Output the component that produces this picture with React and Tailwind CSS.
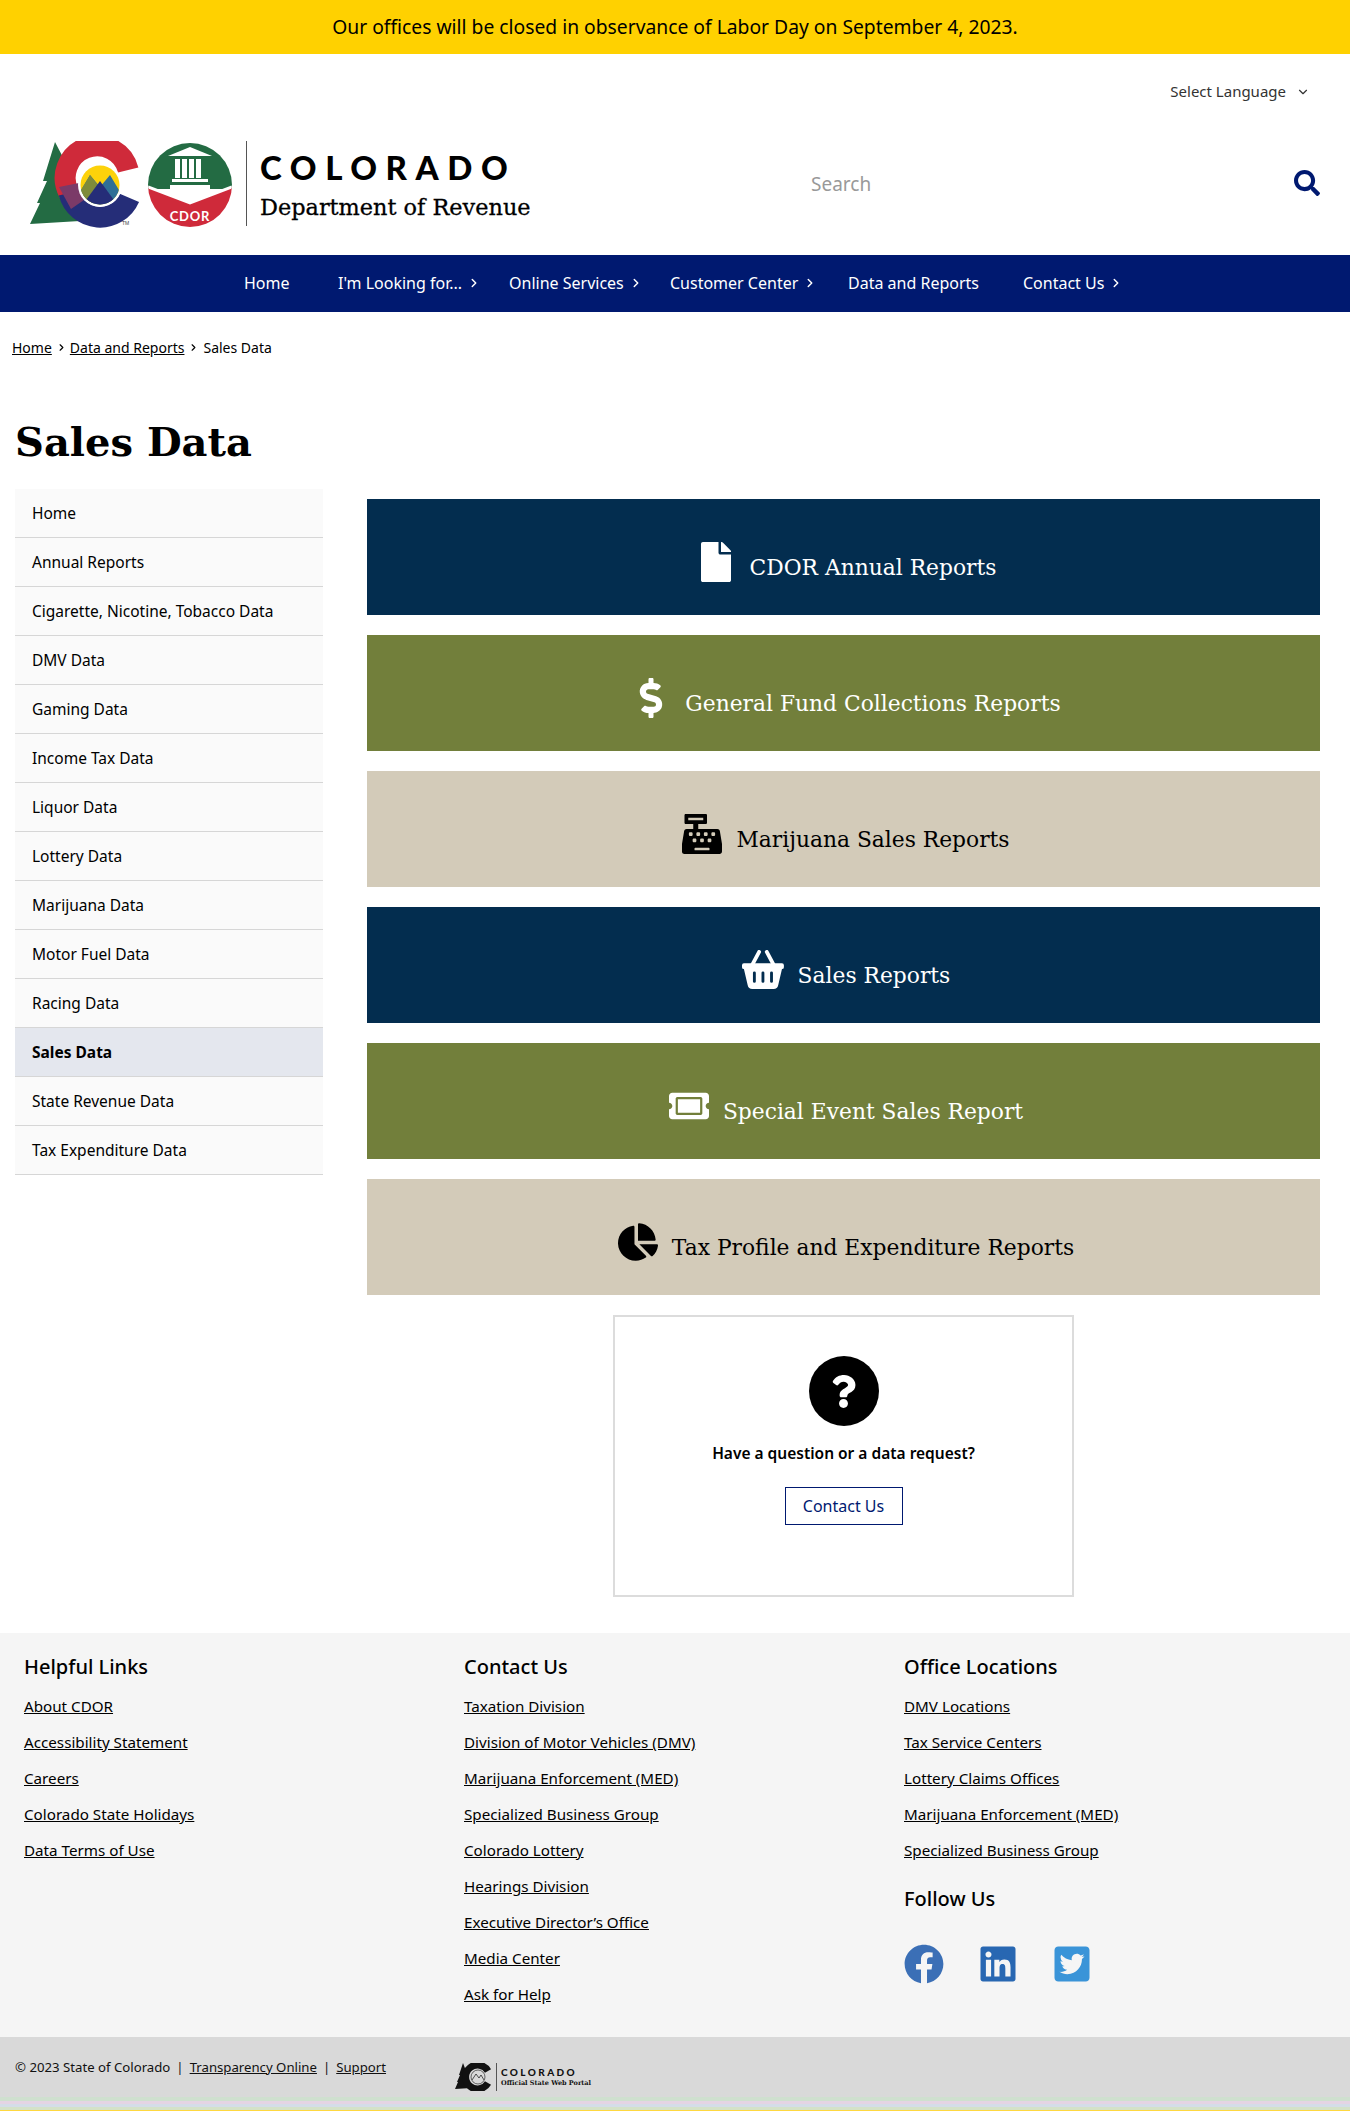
import React from 'react';
import { ChevronRight, ChevronDown } from 'lucide-react';
import { FaSearch, FaFile, FaDollarSign, FaCashRegister, FaTicketAlt, FaChartPie, FaQuestion, FaFacebook, FaLinkedin, FaTwitterSquare } from 'react-icons/fa';

const sans = 'font-["Noto_Sans",sans-serif]';

const navItems = [
  { label: 'Home', w: 'w-[94px]' },
  { label: "I'm Looking for...", w: 'w-[171px]', arrow: true },
  { label: 'Online Services', w: 'w-[161px]', arrow: true },
  { label: 'Customer Center', w: 'w-[178px]', arrow: true },
  { label: 'Data and Reports', w: 'w-[175px]' },
  { label: 'Contact Us', w: 'w-[110px]', arrow: true },
];

const sideItems = [
  'Home', 'Annual Reports', 'Cigarette, Nicotine, Tobacco Data', 'DMV Data', 'Gaming Data',
  'Income Tax Data', 'Liquor Data', 'Lottery Data', 'Marijuana Data', 'Motor Fuel Data',
  'Racing Data', 'Sales Data', 'State Revenue Data', 'Tax Expenditure Data',
];

// the FA basket has a separate rim, this one is drawn to match the picture
const BasketIcon = ({ className }) => (
  <svg viewBox="0 0 44 42" className={className}>
    <path d="M11 15 L18 2 M33 15 L26 2" stroke="currentColor" strokeWidth="4" strokeLinecap="round" fill="none" />
    <path d="M2 14 H42 a2 2 0 0 1 2 2 v2 a2 2 0 0 1 -2 2 L38 37 a5 5 0 0 1 -5 4 H11 a5 5 0 0 1 -5 -4 L2 20 a2 2 0 0 1 -2 -2 v-2 a2 2 0 0 1 2 -2 Z" fill="currentColor" />
    <path d="M13 24 V33 M22 24 V33 M31 24 V33" stroke="#032d4f" strokeWidth="3" strokeLinecap="round" />
  </svg>
);

const cards = [
  { label: 'CDOR Annual Reports', Icon: FaFile, bg: 'bg-[#032d4f] text-white' },
  { label: 'General Fund Collections Reports', Icon: FaDollarSign, bg: 'bg-[#727f3b] text-white' },
  { label: 'Marijuana Sales Reports', Icon: FaCashRegister, bg: 'bg-[#d3cbb9] text-black' },
  { label: 'Sales Reports', Icon: BasketIcon, bg: 'bg-[#032d4f] text-white' },
  { label: 'Special Event Sales Report', Icon: FaTicketAlt, bg: 'bg-[#727f3b] text-white' },
  { label: 'Tax Profile and Expenditure Reports', Icon: FaChartPie, bg: 'bg-[#d3cbb9] text-black' },
];

const helpful = ['About CDOR', 'Accessibility Statement', 'Careers', 'Colorado State Holidays', 'Data Terms of Use'];
const contact = [
  'Taxation Division', 'Division of Motor Vehicles (DMV)', 'Marijuana Enforcement (MED)',
  'Specialized Business Group', 'Colorado Lottery', 'Hearings Division',
  'Executive Director’s Office', 'Media Center', 'Ask for Help',
];
const offices = ['DMV Locations', 'Tax Service Centers', 'Lottery Claims Offices', 'Marijuana Enforcement (MED)', 'Specialized Business Group'];

const Logo = () => (
  <svg width="204" height="88" viewBox="0 0 204 88">
    {/* tree */}
    <path d="M25 1 L37 24 L33 24 L40 46 L36 46 L50 80 L0 83 L10 62 L7 62 L17 40 L13 40 Z" fill="#236b43" />
    {/* C ring */}
    <path d="M98.2 29 A32 32 0 1 0 39 52" fill="none" stroke="#cf2a3a" strokeWidth="21" />
    <path d="M39 52 A32 32 0 0 0 99.4 56.8" fill="none" stroke="#252d78" strokeWidth="21" />
    <path d="M29 46 L49 42 L54 59 L41 68 Z" fill="#7b3a68" />
    <circle cx="70" cy="44" r="22" fill="#fff" />
    <clipPath id="sun"><circle cx="70" cy="44" r="19.5" /></clipPath>
    <g clipPath="url(#sun)">
      <rect x="48" y="22" width="44" height="44" fill="#fdd20a" />
      <path d="M48 54 L60 34 L70 46 L80 34 L92 54 L92 66 L48 66 Z" fill="#2f6f96" />
      <path d="M48 54 L60 34 L74 52 L60 64 Z" fill="#7f8b3a" />
      <path d="M48 70 L70 40 L92 70 Z" fill="#252d78" />
    </g>
    <text x="92" y="84" fontSize="5" fontFamily="Liberation Sans, sans-serif" fill="#444">TM</text>
    {/* seal */}
    <clipPath id="seal"><circle cx="160" cy="44" r="42" /></clipPath>
    <g clipPath="url(#seal)">
      <rect x="118" y="2" width="84" height="46" fill="#236b43" />
      <path d="M118 46 L160 62 L202 46 L202 90 L118 90 Z" fill="#cf2a3a" />
      <path d="M118 46 L160 62 L202 46" fill="none" stroke="#fff" strokeWidth="3" />
      <path d="M138 15 L160 6 L182 15 Z" fill="#fff" />
      <rect x="145" y="18" width="5" height="19" fill="#fff" />
      <rect x="152" y="18" width="5" height="19" fill="#fff" />
      <rect x="159" y="18" width="5" height="19" fill="#fff" />
      <rect x="166" y="18" width="5" height="19" fill="#fff" />
      <rect x="142" y="38" width="36" height="3" fill="#fff" />
      <path d="M140 44 L180 44 L180 48 L160 56 L140 48 Z" fill="#fff" />
    </g>
    <text x="160" y="80" fontSize="13" fontWeight="700" textAnchor="middle" fontFamily="Lato, sans-serif" fill="#fff" letterSpacing="0.8">CDOR</text>
  </svg>
);

const SmallLogo = () => (
  <svg width="37" height="28" viewBox="0 0 37 28">
    <path d="M8 0 L11 8 L10 8 L13 16 L12 16 L16 25 L0 26 L3 19 L2 19 L5 12 L4 12 Z" fill="#111" />
    <path d="M33 8 A12 12 0 1 0 33 20" fill="none" stroke="#111" strokeWidth="7" />
    <circle cx="23" cy="14" r="7" fill="#d9d9d9" stroke="#111" strokeWidth="0.6" />
    <path d="M17 17 L21 11 L24 15 L26 12 L29 17" fill="none" stroke="#111" strokeWidth="0.7" />
  </svg>
);

const FooterColumn = ({ title, links }) => (
  <div>
    <h3 className="text-[20px] font-medium leading-[24px] text-black">{title}</h3>
    <ul className="mt-[15px]">
      {links.map((l) => (
        <li key={l} className="h-[36px] text-[15.2px] leading-[24px] text-black underline">{l}</li>
      ))}
    </ul>
  </div>
);

export default function App() {
  return (
    <div className={`${sans} w-[1350px] h-[2111px] bg-white text-black overflow-hidden`}>
      {/* alert banner */}
      <div className="h-[54px] bg-[#ffd100] flex items-center justify-center text-[19.3px] text-black">
        Our offices will be closed in observance of Labor Day on September 4, 2023.
      </div>

      {/* language select */}
      <div className="h-[33px] mt-[21px] pr-[40px] flex items-center justify-end gap-[10px] text-[15px] text-[#333]">
        <span>Select Language</span>
        <ChevronDown size={14} strokeWidth={2} />
      </div>

      {/* logo and search */}
      <div className="h-[114px] mt-[33px] pl-[30px] pr-[30px] flex items-start">
        <Logo />
        <div className="ml-[12px] w-px h-[85px] bg-[#555]" />
        <div className="ml-[13px] w-[300px]">
          <div className="mt-[8px] text-[33px] leading-[36px] font-['Lato',sans-serif] font-black tracking-[0.26em]">COLORADO</div>
          <div className="mt-[8px] text-[22.4px] leading-[28px] font-['DejaVu_Serif',serif] [-webkit-text-stroke:0.3px_black] whitespace-nowrap">Department of Revenue</div>
        </div>
        <div className="ml-[251px] mt-[29px] flex-1 flex items-center justify-between">
          <span className="text-[19px] text-[#999]">Search</span>
          <FaSearch size={26} className="text-[#001970] -mt-[2px]" />
        </div>
      </div>

      {/* main nav */}
      <nav className="h-[57px] bg-[#001970] pl-[244px] pb-[1px] flex items-center text-[16px] text-white">
        {navItems.map((n) => (
          <div key={n.label} className={`${n.w} flex items-center gap-[5px]`}>
            <span>{n.label}</span>
            {n.arrow && <ChevronRight size={14} strokeWidth={2.5} />}
          </div>
        ))}
      </nav>

      {/* breadcrumb */}
      <div className="h-[20px] mt-[25px] pl-[12px] flex items-center gap-[4px] text-[14px]">
        <span className="underline">Home</span>
        <ChevronRight size={11} strokeWidth={2.5} />
        <span className="underline -ml-[1px]">Data and Reports</span>
        <ChevronRight size={11} strokeWidth={2.5} />
        <span>Sales Data</span>
      </div>

      <h1 className="mt-[57px] pl-[15px] h-[56px] text-[40px] leading-[56px] font-bold font-['DejaVu_Serif',serif]">Sales Data</h1>

      <div className="mt-[19px] pl-[15px] pr-[30px] flex items-start gap-[44px]">
        {/* side nav */}
        <ul className="w-[308px]">
          {sideItems.map((s) => (
            <li
              key={s}
              className={`h-[49px] pl-[17px] pt-[1px] flex items-center border-b border-[#d6d6d6] text-[15.5px] ${s === 'Sales Data' ? 'bg-[#e4e7ee] font-bold' : 'bg-[#fafafa]'}`}
            >
              {s}
            </li>
          ))}
        </ul>

        {/* report cards */}
        <div className="flex-1 pt-[10px]">
          <div className="flex flex-col gap-[20px]">
            {cards.map(({ label, Icon, bg }) => (
              <div key={label} className={`${bg} h-[116px] pt-[10px] pl-[5px] flex items-center justify-center gap-[14px]`}>
                <Icon className="h-[40px] w-auto" />
                <span className="mt-[12px] text-[21.8px] font-['DejaVu_Serif',serif]">{label}</span>
              </div>
            ))}
          </div>

          {/* contact box */}
          <div className="mt-[20px] mx-auto w-[461px] h-[282px] border-2 border-[#dcdcdc] flex flex-col items-center pt-[39px]">
            <div className="w-[70px] h-[70px] rounded-full bg-black flex items-center justify-center">
              <FaQuestion size={33} className="text-white" />
            </div>
            <p className="mt-[15px] text-[15.5px] font-semibold leading-[24px]">Have a question or a data request?</p>
            <div className="mt-[22px] w-[118px] h-[38px] border border-[#001970] flex items-center justify-center text-[16px] text-[#001970]">
              Contact Us
            </div>
          </div>
        </div>
      </div>

      {/* footer links */}
      <footer className="mt-[36px] h-[404px] bg-[#f5f5f5] pl-[24px] pt-[22px] grid grid-cols-[440px_440px_1fr]">
        <FooterColumn title="Helpful Links" links={helpful} />
        <FooterColumn title="Contact Us" links={contact} />
        <div>
          <FooterColumn title="Office Locations" links={offices} />
          <h3 className="mt-[13px] text-[20px] font-medium leading-[24px]">Follow Us</h3>
          <div className="mt-[33px] flex gap-[34px]">
            <FaFacebook size={40} className="text-[#3b6fb6]" />
            <FaLinkedin size={40} className="text-[#2867b2]" />
            <FaTwitterSquare size={40} className="text-[#3a94d8]" />
          </div>
        </div>
      </footer>

      {/* bottom bar */}
      <div className="h-[60px] bg-[#d9d9d9] pl-[15px] flex items-start text-[13.2px] text-[#111]">
        <div className="mt-[21px] flex items-center gap-[6px] w-[440px]">
          <span>© 2023 State of Colorado</span>
          <span>|</span>
          <span className="underline">Transparency Online</span>
          <span>|</span>
          <span className="underline">Support</span>
        </div>
        <div className="mt-[26px] flex items-center">
          <SmallLogo />
          <div className="ml-[4px] w-px h-[28px] bg-[#555]" />
          <div className="ml-[4px]">
            <div className="text-[10px] leading-[12px] font-black font-['Lato',sans-serif] tracking-[0.24em]">COLORADO</div>
            <div className="text-[6.5px] leading-[10px] font-bold font-['DejaVu_Serif',serif]">Official State Web Portal</div>
          </div>
        </div>
      </div>

      {/* pale stripes at the page edge */}
      <div className="h-[4px] bg-[#cfe0cf]" />
      <div className="h-[3px] bg-[#e4d4e4]" />
      <div className="h-[3px] bg-[#d4dde8]" />
      <div className="h-[3px] bg-[#d4e2c8]" />
      <div className="h-[2px] bg-[#ffd840]" />
    </div>
  );
}
